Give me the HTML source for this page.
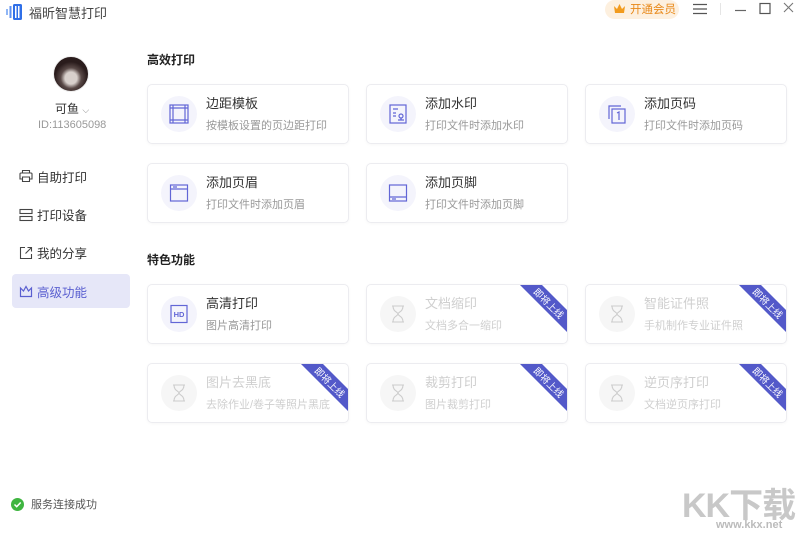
<!DOCTYPE html>
<html><head><meta charset="utf-8"><style>
*{margin:0;padding:0;box-sizing:border-box}
body{width:800px;height:533px;background:#fff;font-family:"Liberation Sans","Noto Sans CJK SC",sans-serif;position:relative;overflow:hidden;color:#333}
.abs{position:absolute}
.card{position:absolute;width:202px;height:60px;border:1px solid #ececf0;border-radius:5px;background:#fff;overflow:hidden;box-shadow:0 1px 3px rgba(0,0,0,.03)}
.card .ic{position:absolute;left:13px;top:11px;width:36px;height:36px;border-radius:50%;background:#f4f4fc}
.card .ic svg{position:absolute;left:8px;top:8px}
.card .t{position:absolute;left:58px;top:8px;font-size:13px;color:#333}
.card .d{position:absolute;left:58px;top:32px;font-size:11px;color:#999}
.card.dis .ic{background:#f6f6f6}
.card.dis .t,.card.dis .d{color:#cfcfcf}
.rib{position:absolute;right:0;top:0;width:48px;height:48px}
.nav{position:absolute;left:20px;font-size:12.5px;color:#333}
.sec{position:absolute;left:147px;font-size:12px;font-weight:bold;color:#222}
</style></head><body>
<svg class="abs" style="left:6px;top:4px" width="18" height="16" viewBox="0 0 18 16"><rect x="0" y="5" width="2" height="6" fill="#8fb6f5"/><rect x="3.5" y="2" width="2" height="12" fill="#5b8ff0"/><rect x="7" y="0" width="9" height="16" rx="1.5" fill="#2f6fe8"/><rect x="9" y="2" width="1.5" height="12" fill="#fff"/><rect x="12" y="2" width="1.5" height="12" fill="#fff"/></svg>
<div class="abs" style="left:29px;top:3px;font-size:13px;color:#444">福昕智慧打印</div>
<div class="abs" style="left:605px;top:0;width:74px;height:19px;background:#fdf0df;border-radius:10px"></div>
<svg class="abs" style="left:614px;top:4px" width="11" height="10" viewBox="0 0 11 10"><path d="M0 2 L3 5 L5.5 0 L8 5 L11 2 L10 9 H1 Z" fill="#f29b1d"/></svg>
<div class="abs" style="left:630px;top:1px;font-size:11.5px;color:#e8891a">开通会员</div>
<svg class="abs" style="left:693px;top:3px" width="14" height="12"><path d="M0 1.5H14M0 6H14M0 10.5H14" stroke="#555" stroke-width="1.2"/></svg>
<div class="abs" style="left:720px;top:3px;width:1px;height:12px;background:#e5e5e5"></div>
<svg class="abs" style="left:735px;top:2px" width="60" height="14"><path d="M0 8.5H11" stroke="#666" stroke-width="1.2"/><rect x="25" y="1.5" width="10" height="10" fill="none" stroke="#555" stroke-width="1.2"/><path d="M49 1L58 10M58 1L49 10" stroke="#777" stroke-width="1.1"/></svg>
<div class="abs" style="left:53px;top:56px;width:36px;height:36px;border-radius:50%;background:radial-gradient(circle at 50% 62%,#d8d0cc 0 22%,#5a4a48 38%,#2a1c1c 60%);border:1px solid #eee"></div>
<div class="abs" style="left:55px;top:100px;font-size:12px;color:#333">可鱼 <span style="color:#888;font-size:9px">⌵</span></div>
<div class="abs" style="left:38px;top:119px;font-size:11px;color:#999">ID:113605098</div>
<svg class="abs" style="left:19px;top:169px" width="14" height="14" viewBox="0 0 14 14" fill="none" stroke="#444" stroke-width="1.1"><path d="M3.5 4V1.5H10.5V4M2 4H12A1 1 0 0 1 13 5V10H11M3 10H1V5A1 1 0 0 1 2 4M3.5 8H10.5V12.5H3.5Z"/></svg>
<div class="nav" style="left:37px;top:167px">自助打印</div>
<svg class="abs" style="left:19px;top:208px" width="14" height="14" fill="none" stroke="#444" stroke-width="1.1"><rect x="1" y="1.5" width="12" height="4"/><rect x="1" y="8.5" width="12" height="4"/></svg>
<div class="nav" style="left:37px;top:205px">打印设备</div>
<svg class="abs" style="left:19px;top:246px" width="14" height="14" fill="none" stroke="#444" stroke-width="1.1"><path d="M6 1.5H1.5V12.5H12.5V8M8.5 1.5H12.5V5.5M12.5 1.5L6.5 7.5"/></svg>
<div class="nav" style="left:37px;top:243px">我的分享</div>
<div class="abs" style="left:12px;top:274px;width:118px;height:34px;background:#e6e7f8;border-radius:4px"></div>
<svg class="abs" style="left:19px;top:285px" width="14" height="13" fill="none" stroke="#5a5fd0" stroke-width="1.2"><path d="M1.5 3L4.5 6L7 1.5L9.5 6L12.5 3V11.5H1.5Z"/></svg>
<div class="nav" style="left:37px;top:282px;color:#5a5fd0">高级功能</div>
<div class="sec" style="top:51px">高效打印</div>
<div class="sec" style="top:251px">特色功能</div>

<div class="card" style="left:147px;top:84px"><div class="ic"><svg width="20" height="20" fill="none" stroke="#6266d6" stroke-width="1.2"><rect x="1" y="1" width="18" height="18"/><path d="M4 1V19M16 1V19M1 4H19M1 16H19"/></svg></div><div class="t">边距模板</div><div class="d">按模板设置的页边距打印</div></div>
<div class="card" style="left:366px;top:84px"><div class="ic"><svg width="20" height="20" fill="none" stroke="#6266d6" stroke-width="1.2"><rect x="2" y="1" width="16" height="18"/><path d="M5 5H10M5 9H8M5 12H8M10 16H16"/><circle cx="13" cy="12" r="2"/><path d="M13 14V16"/></svg></div><div class="t">添加水印</div><div class="d">打印文件时添加水印</div></div>
<div class="card" style="left:585px;top:84px"><div class="ic"><svg width="20" height="20" fill="none" stroke="#6266d6" stroke-width="1.2"><path d="M2 15V2H14"/><rect x="5" y="5" width="13" height="14"/><path d="M10 9L12 8V16"/></svg></div><div class="t">添加页码</div><div class="d">打印文件时添加页码</div></div>
<div class="card" style="left:147px;top:163px"><div class="ic"><svg width="20" height="20" fill="none" stroke="#6266d6" stroke-width="1.2"><rect x="1.5" y="2" width="17" height="16"/><path d="M1.5 6H18.5M4 4H8"/></svg></div><div class="t">添加页眉</div><div class="d">打印文件时添加页眉</div></div>
<div class="card" style="left:366px;top:163px"><div class="ic"><svg width="20" height="20" fill="none" stroke="#6266d6" stroke-width="1.2"><rect x="1.5" y="2" width="17" height="16"/><path d="M1.5 14H18.5M4 16H8"/></svg></div><div class="t">添加页脚</div><div class="d">打印文件时添加页脚</div></div>

<div class="card" style="left:147px;top:284px"><div class="ic"><svg width="20" height="20" fill="none" stroke="#6266d6" stroke-width="1.2"><rect x="2" y="1.5" width="16" height="17"/><text x="10" y="13" font-size="7.5" font-weight="bold" fill="#6266d6" stroke="none" text-anchor="middle" font-family="Liberation Sans">HD</text></svg></div><div class="t">高清打印</div><div class="d">图片高清打印</div></div>

<div class="card dis" style="left:366px;top:284px"><div class="ic"><svg width="20" height="20" fill="none" stroke="#ccc" stroke-width="1.1"><path d="M4 2H16M4 18H16M5 2C5 8 10 8 10 10C10 12 5 12 5 18M15 2C15 8 10 8 10 10C10 12 15 12 15 18"/></svg></div><div class="t">文档缩印</div><div class="d">文档多合一缩印</div><svg class="rib" viewBox="0 0 48 48"><polygon points="1,0 23,0 48,25 48,47" fill="#5359c9"/><text font-size="9.5" fill="#fff" text-anchor="middle" dominant-baseline="central" transform="translate(30 18) rotate(45)" font-family="Noto Sans CJK SC">即将上线</text></svg></div>
<div class="card dis" style="left:585px;top:284px"><div class="ic"><svg width="20" height="20" fill="none" stroke="#ccc" stroke-width="1.1"><path d="M4 2H16M4 18H16M5 2C5 8 10 8 10 10C10 12 5 12 5 18M15 2C15 8 10 8 10 10C10 12 15 12 15 18"/></svg></div><div class="t">智能证件照</div><div class="d">手机制作专业证件照</div><svg class="rib" viewBox="0 0 48 48"><polygon points="1,0 23,0 48,25 48,47" fill="#5359c9"/><text font-size="9.5" fill="#fff" text-anchor="middle" dominant-baseline="central" transform="translate(30 18) rotate(45)" font-family="Noto Sans CJK SC">即将上线</text></svg></div>
<div class="card dis" style="left:147px;top:363px"><div class="ic"><svg width="20" height="20" fill="none" stroke="#ccc" stroke-width="1.1"><path d="M4 2H16M4 18H16M5 2C5 8 10 8 10 10C10 12 5 12 5 18M15 2C15 8 10 8 10 10C10 12 15 12 15 18"/></svg></div><div class="t">图片去黑底</div><div class="d">去除作业/卷子等照片黑底</div><svg class="rib" viewBox="0 0 48 48"><polygon points="1,0 23,0 48,25 48,47" fill="#5359c9"/><text font-size="9.5" fill="#fff" text-anchor="middle" dominant-baseline="central" transform="translate(30 18) rotate(45)" font-family="Noto Sans CJK SC">即将上线</text></svg></div>
<div class="card dis" style="left:366px;top:363px"><div class="ic"><svg width="20" height="20" fill="none" stroke="#ccc" stroke-width="1.1"><path d="M4 2H16M4 18H16M5 2C5 8 10 8 10 10C10 12 5 12 5 18M15 2C15 8 10 8 10 10C10 12 15 12 15 18"/></svg></div><div class="t">裁剪打印</div><div class="d">图片裁剪打印</div><svg class="rib" viewBox="0 0 48 48"><polygon points="1,0 23,0 48,25 48,47" fill="#5359c9"/><text font-size="9.5" fill="#fff" text-anchor="middle" dominant-baseline="central" transform="translate(30 18) rotate(45)" font-family="Noto Sans CJK SC">即将上线</text></svg></div>
<div class="card dis" style="left:585px;top:363px"><div class="ic"><svg width="20" height="20" fill="none" stroke="#ccc" stroke-width="1.1"><path d="M4 2H16M4 18H16M5 2C5 8 10 8 10 10C10 12 5 12 5 18M15 2C15 8 10 8 10 10C10 12 15 12 15 18"/></svg></div><div class="t">逆页序打印</div><div class="d">文档逆页序打印</div><svg class="rib" viewBox="0 0 48 48"><polygon points="1,0 23,0 48,25 48,47" fill="#5359c9"/><text font-size="9.5" fill="#fff" text-anchor="middle" dominant-baseline="central" transform="translate(30 18) rotate(45)" font-family="Noto Sans CJK SC">即将上线</text></svg></div>

<svg class="abs" style="left:11px;top:498px" width="13" height="13"><circle cx="6.5" cy="6.5" r="6.5" fill="#3fb540"/><path d="M3.5 6.5L5.7 8.7L9.7 4.5" stroke="#fff" stroke-width="1.5" fill="none"/></svg>
<div class="abs" style="left:31px;top:496px;font-size:11px;color:#555">服务连接成功</div>
<div class="abs" style="left:682px;top:478px;font-size:34px;font-weight:bold;color:#c8c8c8;letter-spacing:-1px">KK下载</div>
<div class="abs" style="left:716px;top:519px;font-size:11px;color:#bbb;font-weight:bold">www.kkx.net</div>
</body></html>
